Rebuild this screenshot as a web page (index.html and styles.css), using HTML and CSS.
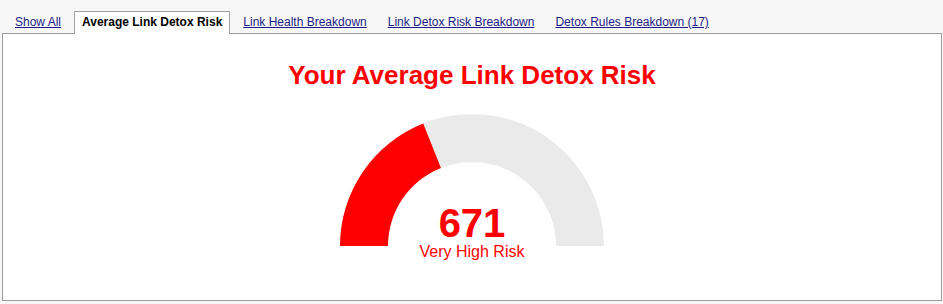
FILE: index.html
```html
<!DOCTYPE html>
<html>
<head>
<meta charset="utf-8">
<link rel="stylesheet" href="styles.css">
</head>
<body>
<div class="tabs">
  <a class="tab" href="#">Show All</a>
  <span class="tab active">Average Link Detox Risk</span>
  <a class="tab" href="#">Link Health Breakdown</a>
  <a class="tab" href="#">Link Detox Risk Breakdown</a>
  <a class="tab" href="#">Detox Rules Breakdown (17)</a>
</div>
<div class="panel">
  <h1 class="title">Your Average Link Detox Risk</h1>
  <div class="gauge">
    <svg class="gauge-svg" width="264" height="132" viewBox="0 0 264 132">
      <path d="M0,132 A132,132 0 0 1 264,132 L216,132 A84,84 0 0 0 48,132 Z" fill="#ebeaeb"/>
      <path d="M0,132 A132,132 0 0 1 83.2,9.4 L100.94,53.96 A84,84 0 0 0 48,132 Z" fill="#ff0000"/>
    </svg>
    <div class="value">671</div>
    <div class="label">Very High Risk</div>
  </div>
</div>
</body>
</html>
```
FILE: styles.css
```css
html, body {
  margin: 0;
  padding: 0;
}
body {
  background: #f7f7f7;
  font-family: "Liberation Sans", Arial, sans-serif;
  width: 943px;
  height: 304px;
  overflow: hidden;
}
.tabs {
  display: flex;
  gap: 5px;
  padding: 11px 0 0 7px;
  height: 22px;
  position: relative;
  z-index: 1;
}
.tab {
  font-size: 12px;
  line-height: 21px;
  padding: 1px 8px 0;
  color: #1c1c86;
  text-decoration: underline;
}
.tab.active {
  color: #000;
  font-weight: bold;
  text-decoration: none;
  background: #fff;
  border: 1px solid #a0a0a0;
  border-bottom: none;
  padding: 0 7px;
  height: 22px;
}
.panel {
  margin: 0 1px 0 2px;
  background: #fff;
  border: 1px solid #9c9c9c;
  height: 266px;
  display: flex;
  flex-direction: column;
  align-items: center;
}
.title {
  margin: 26px 0 0;
  font-size: 26px;
  line-height: 30px;
  font-weight: bold;
  color: #ff0000;
}
.gauge {
  position: relative;
  margin-top: 24px;
  width: 264px;
  height: 150px;
}
.gauge-svg {
  display: block;
}
.value {
  position: absolute;
  left: 0;
  right: 0;
  top: 89px;
  text-align: center;
  font-size: 40px;
  line-height: 40px;
  font-weight: bold;
  color: #ff0000;
}
.label {
  position: absolute;
  left: 0;
  right: 0;
  top: 129px;
  text-align: center;
  font-size: 16px;
  line-height: 18px;
  color: #ff0000;
}
```
